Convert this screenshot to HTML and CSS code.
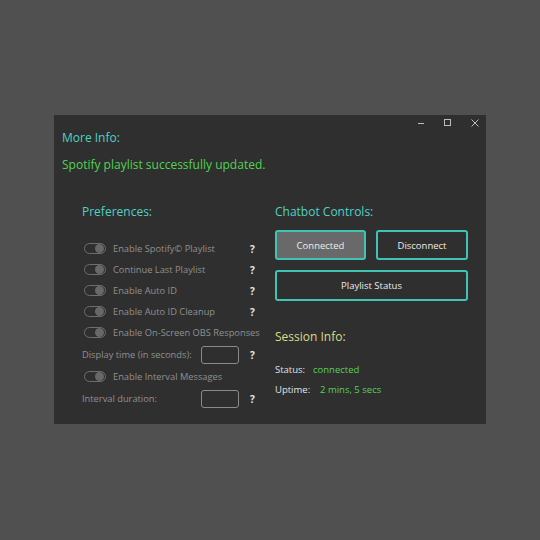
FILE: index.html
```html
<!DOCTYPE html>
<html>
<head>
<meta charset="utf-8">
<link rel="stylesheet" href="styles.css">
</head>
<body>
<div class="window">
  <div class="titlebar">
    <svg class="tb-icon" width="12" height="12" viewBox="0 0 12 12"><path d="M3 6.5h6" stroke="#bdbdbd" stroke-width="1"/></svg>
    <svg class="tb-icon" width="12" height="12" viewBox="0 0 12 12"><rect x="2.5" y="2.5" width="6" height="6" fill="none" stroke="#bdbdbd" stroke-width="1"/></svg>
    <svg class="tb-icon" width="12" height="12" viewBox="0 0 12 12"><path d="M2.5 2.5l7 7M9.5 2.5l-7 7" stroke="#bdbdbd" stroke-width="1"/></svg>
  </div>
  <div class="more-info">More Info:</div>
  <div class="message">Spotify playlist successfully updated.</div>
  <div class="columns">
    <div class="prefs">
      <div class="heading">Preferences:</div>
      <div class="list">
        <div class="row"><span class="toggle"><span class="knob"></span></span><span class="label">Enable Spotify© Playlist</span><span class="help">?</span></div>
        <div class="row"><span class="toggle"><span class="knob"></span></span><span class="label">Continue Last Playlist</span><span class="help">?</span></div>
        <div class="row"><span class="toggle"><span class="knob"></span></span><span class="label">Enable Auto ID</span><span class="help">?</span></div>
        <div class="row"><span class="toggle"><span class="knob"></span></span><span class="label">Enable Auto ID Cleanup</span><span class="help">?</span></div>
        <div class="row"><span class="toggle"><span class="knob"></span></span><span class="label">Enable On-Screen OBS Responses</span></div>
        <div class="row input-row"><span class="field-label">Display time (in seconds):</span><span class="input"></span><span class="help">?</span></div>
        <div class="row"><span class="toggle"><span class="knob"></span></span><span class="label">Enable Interval Messages</span></div>
        <div class="row input-row"><span class="field-label">Interval duration:</span><span class="input"></span><span class="help">?</span></div>
      </div>
    </div>
    <div class="controls">
      <div class="heading">Chatbot Controls:</div>
      <div class="btn-row">
        <div class="btn active">Connected</div>
        <div class="btn">Disconnect</div>
      </div>
      <div class="btn wide">Playlist Status</div>
      <div class="heading session">Session Info:</div>
      <div class="info-row first"><span class="info-label">Status:</span><span class="info-val">connected</span></div>
      <div class="info-row"><span class="info-label">Uptime:</span><span class="info-val up">2 mins, 5 secs</span></div>
    </div>
  </div>
</div>
</body>
</html>
```
FILE: styles.css
```css
* { box-sizing: border-box; }
html, body { margin: 0; height: 100%; }
body {
  background: #505050;
  padding: 115px 0 0 54px;
  font-family: "Open Sans", "Noto Sans", sans-serif;
}
.window {
  width: 432px;
  height: 309px;
  background: #2f2f2f;
  display: flex;
  flex-direction: column;
}
.titlebar {
  height: 15px;
  display: flex;
  justify-content: flex-end;
  align-items: flex-start;
  gap: 15px;
  padding: 2px 5px 0 0;
}
.tb-icon { display: block; }
.more-info {
  color: #4fd1c5;
  font-size: 12px;
  font-weight: 500;
  line-height: 16px;
  padding-left: 8px;
}
.message {
  color: #4fd34f;
  font-size: 12px;
  font-weight: 500;
  line-height: 16px;
  padding-left: 8px;
  margin-top: 11px;
}
.columns {
  display: flex;
  margin-top: 31px;
  padding-left: 28px;
}
.heading {
  color: #4fd1c5;
  font-size: 12px;
  font-weight: 500;
  line-height: 16px;
}
.prefs { width: 176px; }
.list { margin-top: 18px; }
.row {
  height: 21px;
  display: flex;
  align-items: center;
  font-size: 9.3px;
  color: #909090;
}
.row.input-row { height: 23px; }
.toggle {
  width: 22px;
  height: 11px;
  border: 1px solid #6e6e6e;
  border-radius: 6px;
  margin-left: 2px;
  margin-right: 7px;
  display: flex;
  justify-content: flex-end;
  align-items: center;
  padding-right: 1px;
  flex: none;
}
.knob {
  width: 9px;
  height: 9px;
  border-radius: 50%;
  background: #686868;
}
.label { flex: 1; white-space: nowrap; }
.help {
  color: #e6e6e6;
  font-weight: bold;
  font-size: 10px;
  width: 8px;
  margin-left: auto;
  margin-right: 0;
}
.field-label { width: 119px; white-space: nowrap; }
.input {
  width: 38px;
  height: 18px;
  border: 1px solid #8a8a8a;
  border-radius: 3px;
  margin-right: 10px;
}
.controls {
  margin-left: 17px;
  width: 193px;
}
.btn-row {
  display: flex;
  gap: 10px;
  margin-top: 10px;
}
.btn {
  width: 91px;
  height: 30px;
  border: 2px solid #3fc4b4;
  border-radius: 3px;
  display: flex;
  align-items: center;
  justify-content: center;
  color: #ececec;
  font-size: 9.5px;
  font-weight: 500;
}
.btn-row .btn:last-child { width: 92px; }
.btn.active { background: #696969; }
.btn.wide {
  width: 193px;
  height: 31px;
  margin-top: 10px;
}
.heading.session {
  color: #dcdc86;
  margin-top: 28px;
}
.info-row {
  display: flex;
  font-size: 9.5px;
  font-weight: 500;
  line-height: 16px;
  margin-top: 4px;
}
.info-row.first { margin-top: 17px; }
.info-label { color: #e2e2e2; width: 38px; }
.info-row:last-child .info-label { width: 45px; }
.info-val { color: #58d058; }
```
